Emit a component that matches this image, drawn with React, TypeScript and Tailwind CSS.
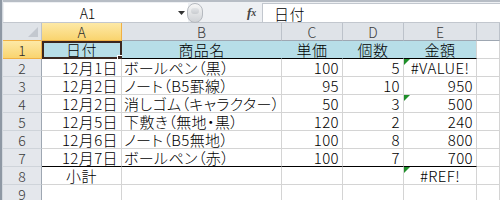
import React from "react";

type Align = "left" | "right" | "center";

const FONT = "font-['Noto_Sans_CJK_JP',sans-serif] [font-feature-settings:'palt']";

const DATA: [string, string, string, string, string][] = [
  ["12月1日", "ボールペン（黒）", "100", "5", "#VALUE!"],
  ["12月2日", "ノート（B5罫線）", "95", "10", "950"],
  ["12月2日", "消しゴム（キャラクター）", "50", "3", "500"],
  ["12月5日", "下敷き（無地・黒）", "120", "2", "240"],
  ["12月6日", "ノート（B5無地）", "100", "8", "800"],
  ["12月7日", "ボールペン（赤）", "100", "7", "700"],
];

// which E cells carry the green error marker (row numbers)
const MARKED = [2, 4, 8];

function ColHead({ label, selected }: { label: string; selected?: boolean }) {
  return (
    <div
      className={
        selected
          ? "flex h-[18px] items-center justify-center border-b border-r border-[#f0b044] bg-gradient-to-b from-[#fde9a6] to-[#f9d46e] text-[14px] font-light leading-none text-[#2b2b2b]"
          : "flex h-[18px] items-center justify-center border-b border-r border-b-[#9ea7b2] border-r-[#bcc2ca] bg-[#dfe3e8] text-[14px] font-light leading-none text-[#3a3a3a]"
      }
    >
      {label && <span className="inline-block h-[14px] leading-[14px]">{label}</span>}
    </div>
  );
}

function RowHead({ n, selected }: { n: number; selected?: boolean }) {
  return (
    <div
      className={
        selected
          ? "flex h-[18px] items-center justify-center border-b border-r border-[#f0b044] bg-gradient-to-b from-[#fde9a6] to-[#f9d46e] text-[14px] font-light leading-none text-[#2b2b2b]"
          : "flex h-[18px] items-start justify-center overflow-hidden border-b border-r border-b-[#cfd4da] border-r-[#9ea7b2] bg-[#e4e7ec] pt-[2px] text-[14px] font-light leading-none text-[#3a3a3a]"
      }
    >
      <span className="inline-block h-[14px] leading-[14px]">{n}</span>
    </div>
  );
}

function Cell({
  text,
  align = "left",
  fill,
  black,
  marker,
  noRight,
}: {
  text?: string;
  align?: Align;
  fill?: boolean;
  black?: boolean;
  marker?: boolean;
  noRight?: boolean;
}) {
  const justify =
    align === "right" ? "justify-end pr-[3px]" : align === "center" ? "justify-center" : "justify-start pl-[2px]";
  return (
    <div
      className={`relative flex h-[18px] items-end whitespace-nowrap border-b border-r pb-[1px] text-[15px] font-light tracking-[0.4px] text-black ${justify} ${
        fill ? "bg-[#b7dee8]" : "bg-white"
      } ${black ? "border-b-black" : "border-b-[#d4d4d4]"} ${
        noRight ? "border-r-[#b7dee8]" : "border-r-[#d4d4d4]"
      }`}
    >
      {marker && (
        <svg className="absolute left-0 top-0" width="6" height="6" viewBox="0 0 6 6">
          <polygon points="0,0 6,0 0,6" fill="#1f8f2a" />
        </svg>
      )}
      {text && <span className="inline-block h-[15px] leading-[15px]">{text}</span>}
    </div>
  );
}

function FormulaBar() {
  return (
    <div className="flex h-[28px] flex-col border-t-2 border-[#b7bdc5] bg-[#eef0f3]">
      <div className="flex h-[21px] items-stretch border-b border-[#c2c7ce] pt-[1px]">
        {/* name box */}
        <div className="relative ml-[1px] flex w-[184px] items-center bg-white">
          <span className="w-[167px] text-center text-[14px] font-light leading-none text-black">A1</span>
          <svg className="absolute left-[174px] top-[8px]" width="7" height="4" viewBox="0 0 7 4">
            <polygon points="0,0 7,0 3.5,4" fill="#333" />
          </svg>
        </div>
        {/* splitter knob */}
        <div className="relative -ml-[1px] h-[20px] w-[16px] rounded-full border border-[#b5b9bf] bg-gradient-to-b from-[#f7f7f7] to-[#cfd2d6]">
          <div className="absolute left-[3px] top-[4px] h-[6px] w-[8px] rounded-full bg-gradient-to-b from-[#e2e4e7] to-[#c9ccd0]" />
        </div>
        <div className="w-[44px]" />
        {/* fx */}
        <div className="flex w-[15px] items-center font-['Liberation_Serif',serif] text-[13px] font-bold italic leading-none text-[#444]">
          f<span className="text-[10px]">x</span>
        </div>
        {/* formula input */}
        <div className="flex flex-1 items-center border-l border-t border-[#c2c7ce] bg-white pl-[11px] text-[15px] font-light leading-none tracking-[0.4px] text-black">
          日付
        </div>
      </div>
    </div>
  );
}

export default function App() {
  const rows = [] as React.ReactNode[];

  // row 1: headers
  rows.push(
    <React.Fragment key="r1">
      <RowHead n={1} selected />
      <div className="relative">
        <Cell text="日付" align="center" fill black noRight />
        {/* active cell border */}
        <div className="pointer-events-none absolute left-0 top-0 h-[18px] w-[80px] border-2 border-[#3a2720]" />
        <div className="absolute left-[75px] top-[14px] h-[6px] w-[7px] border border-white bg-[#3a2720]" />
      </div>
      <Cell text="商品名" align="center" fill black noRight />
      <Cell text="単価" align="center" fill black noRight />
      <Cell text="個数" align="center" fill black noRight />
      <Cell text="金額" align="center" fill black />
      <Cell />
    </React.Fragment>
  );

  DATA.forEach((r, i) => {
    const n = i + 2;
    const last = n === 7;
    const err = r[4].startsWith("#");
    rows.push(
      <React.Fragment key={n}>
        <RowHead n={n} />
        <Cell text={r[0]} align="right" black={last} />
        <Cell text={r[1]} black={last} />
        <Cell text={r[2]} align="right" black={last} />
        <Cell text={r[3]} align="right" black={last} />
        <Cell text={r[4]} align={err ? "center" : "right"} black={last} marker={MARKED.includes(n)} />
        <Cell />
      </React.Fragment>
    );
  });

  rows.push(
    <React.Fragment key="r8">
      <RowHead n={8} />
      <Cell text="小計" align="center" />
      <Cell />
      <Cell />
      <Cell />
      <Cell text="#REF!" align="center" marker />
      <Cell />
    </React.Fragment>
  );

  rows.push(
    <React.Fragment key="r9">
      <RowHead n={9} />
      <Cell />
      <Cell />
      <Cell />
      <Cell />
      <Cell />
      <Cell />
    </React.Fragment>
  );

  return (
    <div className={`flex h-[200px] w-[500px] overflow-hidden bg-white ${FONT}`}>
      {/* window edge */}
      <div className="flex w-[3px] shrink-0">
        <div className="w-[2px] bg-[#8e98a4]" />
        <div className="w-[1px] bg-[#d3d8de]" />
      </div>
      <div className="flex min-w-0 flex-1 flex-col">
        <FormulaBar />
        <div className="grid grid-cols-[39px_80px_160px_61px_61px_73px_1fr]">
          {/* corner */}
          <div className="relative h-[18px] border-b border-r border-b-[#f0b044] border-r-[#bcc2ca] bg-[#dfe3e8]">
            <svg className="absolute bottom-[3px] right-[3px]" width="10" height="10" viewBox="0 0 10 10">
              <polygon points="10,0 10,10 0,10" fill="#c3c8cf" />
            </svg>
          </div>
          <ColHead label="A" selected />
          <ColHead label="B" />
          <ColHead label="C" />
          <ColHead label="D" />
          <ColHead label="E" />
          <ColHead label="" />
          {rows}
        </div>
      </div>
    </div>
  );
}
